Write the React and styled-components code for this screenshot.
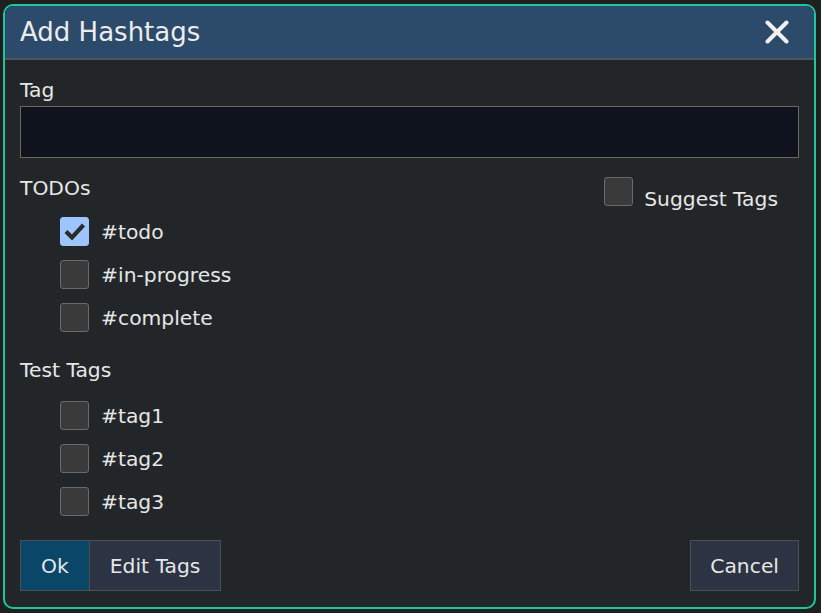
import React from 'react'
import styled, { createGlobalStyle } from 'styled-components'

const GlobalStyle = createGlobalStyle`
  html, body {
    margin: 0;
    padding: 0;
    background: #1d1f21;
  }
  * { box-sizing: border-box; }
`

const Page = styled.div`
  width: 821px;
  height: 613px;
  padding: 4px 5px 4px 3px;
  font-family: "DejaVu Sans", Verdana, sans-serif;
  color: #e6e6e6;
`

const Dialog = styled.div`
  width: 813px;
  height: 605px;
  border: 2px solid #1ec79b;
  border-radius: 10px;
  background: #232629;
  overflow: hidden;
  display: flex;
  flex-direction: column;
`

const Header = styled.div`
  height: 54px;
  flex: none;
  display: flex;
  align-items: center;
  justify-content: space-between;
  padding: 0 24px 0 15px;
  background: #2c4a6a;
  border-bottom: 2px solid #4f555a;
`

const Title = styled.h1`
  margin: 0;
  font-size: 26px;
  font-weight: normal;
  color: #ececec;
`

const Close = styled.button`
  width: 26px;
  height: 26px;
  padding: 0;
  border: none;
  background: none;
  display: flex;
  align-items: center;
  justify-content: center;
`

const Body = styled.div`
  flex: 1;
  display: flex;
  flex-direction: column;
  padding: 18px 15px 16px 15px;
  font-size: 20.3px;
`

const Label = styled.div`
  line-height: 24px;
  margin-bottom: ${p => p.gap || 0}px;
`

const Input = styled.input`
  display: block;
  width: 100%;
  height: 52px;
  background: #0f131d;
  border: 1px solid #6b665e;
  color: #eee;
  outline: none;
  margin-bottom: 18px;
`

const Split = styled.div`
  display: flex;
  justify-content: space-between;
  align-items: flex-start;
`

const Group = styled.div`
  display: flex;
  flex-direction: column;
`

const List = styled.div`
  display: flex;
  flex-direction: column;
  gap: 14px;
  padding: ${p => p.top || 17}px 0 0 40px;
  margin-bottom: ${p => p.gap || 0}px;
`

const Row = styled.label`
  display: flex;
  align-items: center;
  gap: 12px;
  line-height: 24px;
`

const Box = styled.span`
  width: 29px;
  height: 29px;
  flex: none;
  border-radius: 3px;
  border: 1px solid ${p => (p.checked ? '#9ec5fe' : '#6a6a6a')};
  background: ${p => (p.checked ? '#9ec5fe' : '#3a3a3a')};
  display: flex;
  align-items: center;
  justify-content: center;
`

const Suggest = styled.label`
  display: flex;
  align-items: baseline;
  gap: 11px;
  margin: 1px 21px 0 0;
  line-height: 24px;
`

const Footer = styled.div`
  margin-top: auto;
  display: flex;
  justify-content: space-between;
`

const ButtonGroup = styled.div`
  display: flex;
`

const Button = styled.button`
  height: 51px;
  padding: 0 ${p => p.pad || 20}px;
  font-family: inherit;
  font-size: 20.3px;
  color: #e6e6e6;
  background: ${p => (p.primary ? '#0a4668' : '#2c3342')};
  border: 1px solid #4b5157;
  & + & { border-left: none; }
`

function Check({ checked }) {
  return (
    <Box checked={checked}>
      {checked && (
        <svg width="22" height="20" viewBox="0 0 22 20">
          <polyline points="2,9.5 8,15.5 19.5,3" fill="none" stroke="#2b2b2b" strokeWidth="4.2" />
        </svg>
      )}
    </Box>
  )
}

const todos = [
  { name: '#todo', checked: true },
  { name: '#in-progress' },
  { name: '#complete' },
]
const tests = [{ name: '#tag1' }, { name: '#tag2' }, { name: '#tag3' }]

export default function App() {
  return (
    <Page>
      <GlobalStyle />
      <Dialog>
        <Header>
          <Title>Add Hashtags</Title>
          <Close aria-label="Close">
            <svg width="24" height="24" viewBox="0 0 24 24">
              <path d="M2.5 2.5 L21.5 21.5 M21.5 2.5 L2.5 21.5" stroke="#f0f0f0" strokeWidth="4" strokeLinecap="round" />
            </svg>
          </Close>
        </Header>
        <Body>
          <Label gap={4}>Tag</Label>
          <Input />
          <Split>
            <Group>
              <Label>TODOs</Label>
              <List gap={26}>
                {todos.map(t => (
                  <Row key={t.name}>
                    <Check checked={t.checked} />
                    {t.name}
                  </Row>
                ))}
              </List>
              <Label>Test Tags</Label>
              <List top={19}>
                {tests.map(t => (
                  <Row key={t.name}>
                    <Check />
                    {t.name}
                  </Row>
                ))}
              </List>
            </Group>
            <Suggest>
              <Check />
              Suggest Tags
            </Suggest>
          </Split>
          <Footer>
            <ButtonGroup>
              <Button primary>Ok</Button>
              <Button>Edit Tags</Button>
            </ButtonGroup>
            <Button pad={19}>Cancel</Button>
          </Footer>
        </Body>
      </Dialog>
    </Page>
  )
}
